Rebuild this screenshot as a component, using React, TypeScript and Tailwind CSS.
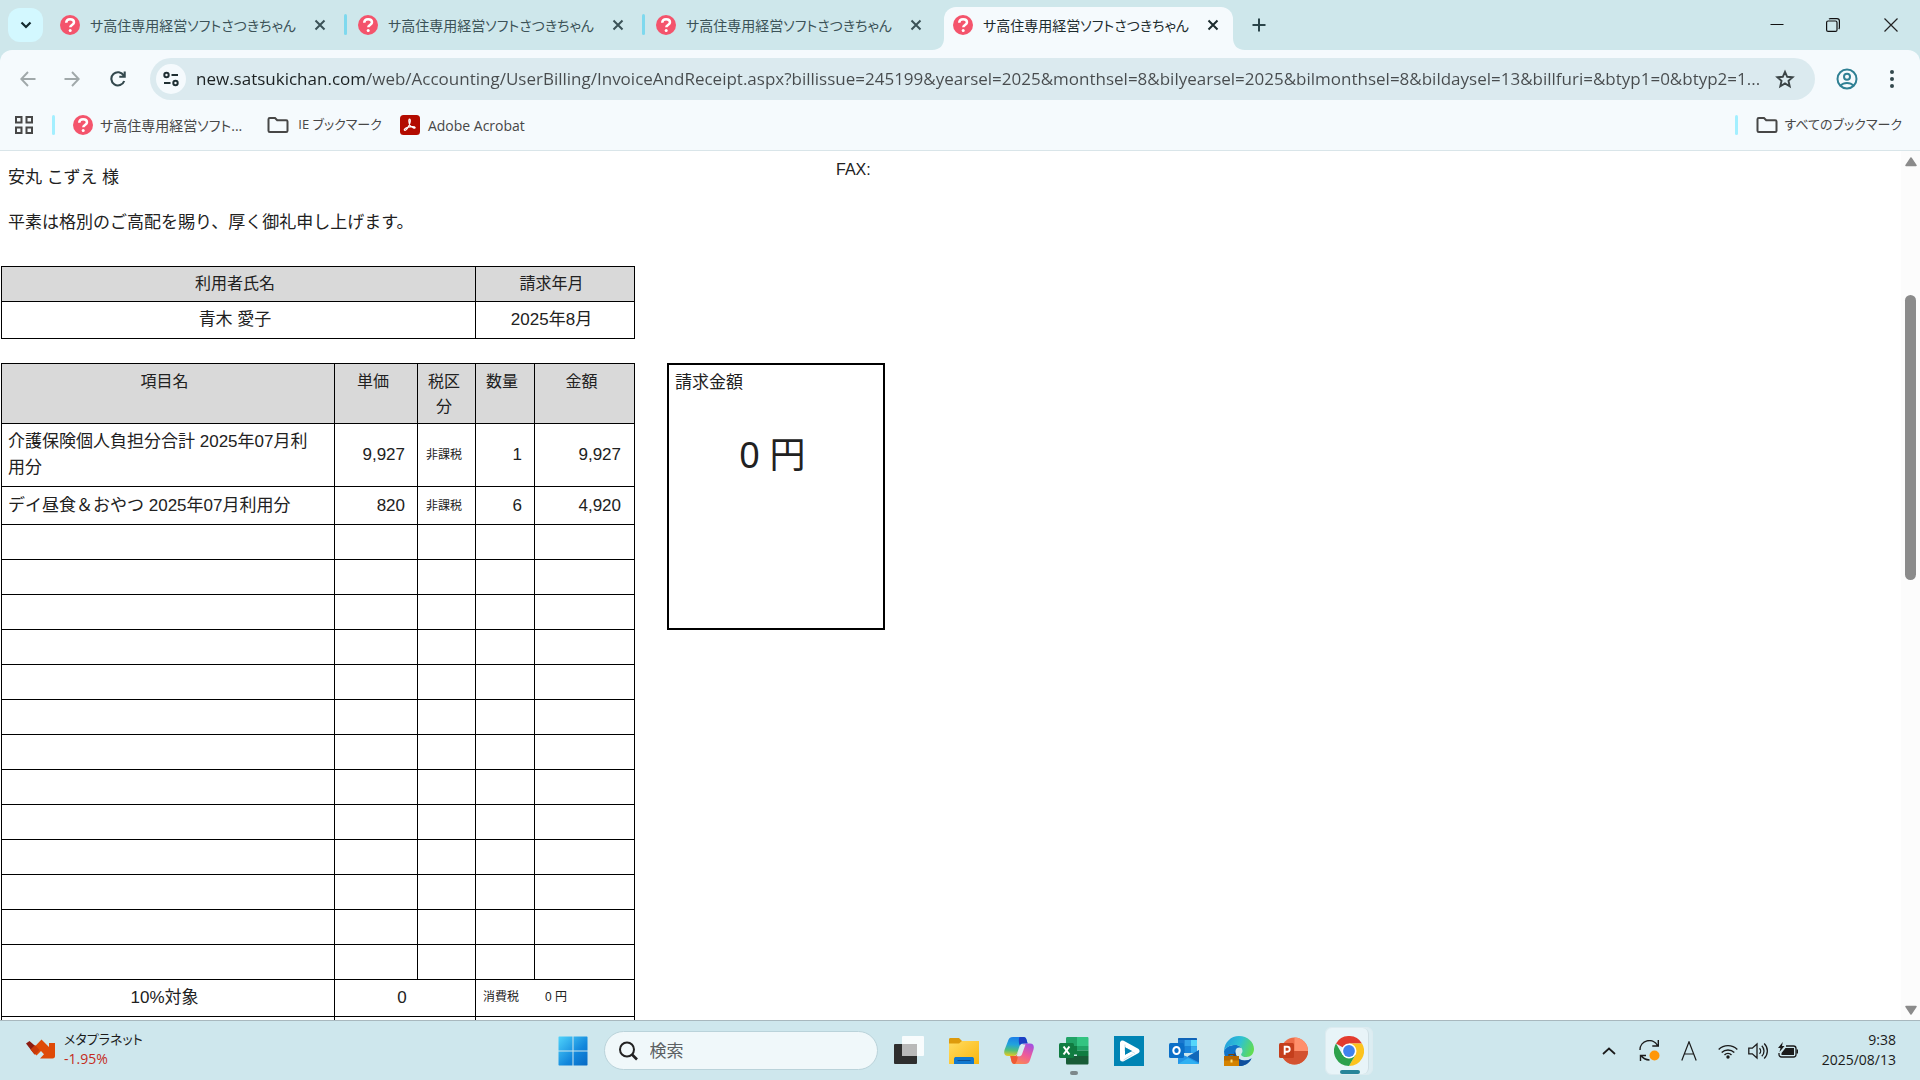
import { ReactNode } from 'react';

const TAB_TITLE = 'サ高住専用経営ソフトさつきちゃん';

const ADDRESS =
  'new.satsukichan.com/web/Accounting/UserBilling/InvoiceAndReceipt.aspx?billissue=245199&yearsel=2025&monthsel=8&bilyearsel=2025&bilmonthsel=8&bildaysel=13&billfuri=&btyp1=0&btyp2=1...';

const tabs = [
  { id: 1, active: false },
  { id: 2, active: false },
  { id: 3, active: false },
  { id: 4, active: true },
];

const items = [
  { name: '介護保険個人負担分合計 2025年07月利用分', price: '9,927', tax: '非課税', qty: '1', total: '9,927' },
  { name: 'デイ昼食＆おやつ 2025年07月利用分', price: '820', tax: '非課税', qty: '6', total: '4,920' },
];

const EMPTY_ROWS = 13;

function Favicon() {
  return (
    <svg viewBox="0 0 20 20" className="size-5 shrink-0">
      <circle cx="10" cy="10" r="10" fill="#f4546c" />
      <path d="M6.200 7.800C6.300 5.400 8 4.200 10.100 4.200c2.200 0 3.900 1.200 3.900 3.100 0 2.700-3.700 2.800-3.700 5" fill="none" stroke="#fff" strokeWidth="2.500" />
      <circle cx="10.200" cy="15.600" r="1.500" fill="#fff" />
    </svg>
  );
}

function FolderIcon() {
  return (
    <svg viewBox="0 0 22 18" className="h-[18px] w-[22px] shrink-0" fill="none" stroke="#474747" strokeWidth="2">
      <path d="M1.500 3.200C1.500 2.300 2 2 2.800 2H8l2.200 2.300h9c.9 0 1.300.4 1.300 1.200v9.200c0 .9-.4 1.300-1.300 1.300H2.800c-.9 0-1.300-.4-1.300-1.300z" />
    </svg>
  );
}

function CloseIcon() {
  return (
    <svg viewBox="0 0 12 12" className="size-3" stroke="currentColor" strokeWidth="2">
      <path d="M1.500 1.500l9 9M10.500 1.500l-9 9" />
    </svg>
  );
}

function Tab({ active }: { active: boolean }) {
  return (
    <div
      className={
        active
          ? 'relative mt-[7px] flex h-[43px] w-[289px] items-center rounded-t-xl bg-[#f5fafd] pb-[7px] pl-[9px] text-[#1c2b2e]'
          : 'flex h-[50px] w-[298px] items-center pl-[10px] text-[#3b5257]'
      }
    >
      {active && (
        <>
          <svg viewBox="0 0 12 12" className="absolute -left-3 bottom-0 size-3">
            <path d="M12 0v12H0C8 12 12 7 12 0z" fill="#f5fafd" />
          </svg>
          <svg viewBox="0 0 12 12" className="absolute -right-3 bottom-0 size-3">
            <path d="M0 0v12h12C4 12 0 7 0 0z" fill="#f5fafd" />
          </svg>
        </>
      )}
      <Favicon />
      <span className="ml-[10px] w-[218px] truncate text-[14px]">{TAB_TITLE}</span>
      <button aria-label="タブを閉じる" className="flex size-6 shrink-0 items-center justify-center">
        <CloseIcon />
      </button>
    </div>
  );
}

function TabStrip() {
  return (
    <div className="flex h-[50px] bg-[#cee7eb]">
      <button aria-label="タブを検索" className="mt-2 ml-2 flex h-[34px] w-[35px] items-center justify-center rounded-xl bg-[#d3f8ff]">
        <svg viewBox="0 0 12 8" className="h-2 w-3" fill="none" stroke="#12292d" strokeWidth="2.200">
          <path d="M1.500 1.500L6 6l4.500-4.500" />
        </svg>
      </button>
      <div className="ml-[7px] flex">
        {tabs.map((tab) => (
          <div key={tab.id} className="flex">
            {(tab.id === 2 || tab.id === 3) && <i className="mt-[14px] -mr-[3px] h-[21px] w-[3px] -translate-x-1 rounded-full bg-[#7ed9ee]" />}
            <Tab active={tab.active} />
          </div>
        ))}
      </div>
      <button aria-label="新しいタブ" className="ml-2 flex w-9 items-center justify-center">
        <svg viewBox="0 0 14 14" className="size-[14px]" stroke="#2a4449" strokeWidth="2">
          <path d="M7 .5v13M.5 7h13" />
        </svg>
      </button>
      <div className="ml-auto flex">
        <button aria-label="最小化" className="flex w-14 items-center justify-center">
          <svg viewBox="0 0 14 14" className="size-[14px]" stroke="#111">
            <path d="M.5 6.500h13" />
          </svg>
        </button>
        <button aria-label="元に戻す" className="flex w-14 items-center justify-center">
          <svg viewBox="0 0 14 14" className="size-[14px]" fill="none" stroke="#111" strokeWidth="1.200">
            <rect x=".6" y="3" width="10.400" height="10.400" rx="1.500" />
            <path d="M3 1.200c.5-.5 1-.6 1.500-.6H11c1.500 0 2.400.9 2.400 2.400V9.500c0 .6-.2 1.100-.6 1.500" />
          </svg>
        </button>
        <button aria-label="閉じる" className="flex w-[59px] items-center justify-center">
          <svg viewBox="0 0 14 14" className="size-[14px]" stroke="#222" strokeWidth="1.200">
            <path d="M.5.5l13 13M13.500.5l-13 13" />
          </svg>
        </button>
      </div>
    </div>
  );
}

function AddressRow() {
  return (
    <div className="flex h-[58px] items-center pr-[18px] pl-[14px]">
      <button aria-label="戻る" className="flex w-7 justify-center">
        <svg viewBox="0 0 16 16" className="size-4" fill="none" stroke="#a0a8aa" strokeWidth="1.900">
          <path d="M15.500 8H1.500M8 1L1.300 8 8 15" />
        </svg>
      </button>
      <button aria-label="進む" className="ml-4 flex w-7 justify-center">
        <svg viewBox="0 0 16 16" className="size-4" fill="none" stroke="#a0a8aa" strokeWidth="1.900">
          <path d="M.5 8h14M8 1l6.700 7L8 15" />
        </svg>
      </button>
      <button aria-label="再読み込み" className="ml-[18px] flex w-7 justify-center">
        <svg viewBox="0 0 16 16" className="size-4" fill="none" stroke="#33484d" strokeWidth="2.100">
          <path d="M14.200 10A6.600 6.600 0 1 1 13.700 4.600M14.700.5v5.300H9.300" />
        </svg>
      </button>
      <div className="ml-[18px] flex h-[42px] min-w-0 flex-1 items-center rounded-full bg-[#dbeaef] pr-[20px] pl-[6px]">
        <button aria-label="サイト情報" className="flex size-[30px] shrink-0 items-center justify-center rounded-full bg-[#f5fafd]">
          <svg viewBox="0 0 16 16" className="size-4" fill="none" stroke="#1f2f33" strokeWidth="2">
            <circle cx="3.500" cy="4" r="2.200" />
            <path d="M8.500 4H15M1 12h6.500" />
            <circle cx="12.500" cy="12" r="2.200" />
          </svg>
        </button>
        <input
          aria-label="アドレス"
          type="text"
          readOnly
          value={ADDRESS}
          className="ml-[10px] min-w-0 flex-1 bg-[linear-gradient(90deg,#1b2021_169px,#474b4d_169px)] bg-clip-text text-[17px] text-transparent outline-none"
        />
        <button aria-label="ブックマークに追加" className="ml-[7px] flex w-5 shrink-0 justify-center">
          <svg viewBox="0 0 20 20" className="size-5" fill="none" stroke="#3b4446" strokeWidth="1.900">
            <path d="M10 2.800l2.200 5 5.400.5-4.100 3.600 1.200 5.300L10 14.400l-4.700 2.800 1.200-5.300-4.100-3.600 5.400-.5z" />
          </svg>
        </button>
      </div>
      <button aria-label="プロフィール" className="ml-[21px] shrink-0">
        <svg viewBox="0 0 22 22" className="size-[22px]" fill="none" stroke="#2f8094" strokeWidth="2">
          <circle cx="11" cy="11" r="9.500" />
          <circle cx="11" cy="8.700" r="3" />
          <path d="M4.500 17.500c1.700-1.800 3.900-2.600 6.500-2.600s4.800.8 6.500 2.600" />
        </svg>
      </button>
      <button aria-label="メニュー" className="ml-6 flex w-5 justify-center">
        <svg viewBox="0 0 4 18" className="h-[18px] w-1" fill="#33484d">
          <circle cx="2" cy="2" r="2" />
          <circle cx="2" cy="9" r="2" />
          <circle cx="2" cy="16" r="2" />
        </svg>
      </button>
    </div>
  );
}

function BookmarkBar() {
  return (
    <nav className="flex h-[42px] items-center pr-[18px] pb-2 pl-[15px] text-[14px] text-[#474747]">
      <button aria-label="アプリ">
        <svg viewBox="0 0 18 18" className="mr-px size-[18px]" fill="none" stroke="#474747" strokeWidth="2">
          <path d="M1 1h5.500v5.500H1zM11.500 1H17v5.500h-5.500zM1 11.500h5.500V17H1zM11.500 11.500H17V17h-5.500z" />
        </svg>
      </button>
      <i className="ml-[18px] h-5 w-[3px] rounded-full bg-[#a3efff]" />
      <a href="#" className="ml-[18px] flex items-center gap-[7px]">
        <Favicon />
        サ高住専用経営ソフト...
      </a>
      <a href="#" className="ml-[25px] flex items-center gap-[9px] text-[13px]">
        <FolderIcon />
        IE ブックマーク
      </a>
      <a href="#" className="ml-[18px] flex items-center gap-2">
        <svg viewBox="0 0 20 20" className="size-5">
          <rect width="20" height="20" rx="3.500" fill="#b30b00" />
          <path d="M9.500 4.200c1.300 0 .9 3.300-.4 6-1.200 2.600-2.800 5.100-4.100 5.100-1.400 0-.9-1.800 2.500-2.900 3.300-1.100 7.300-1.200 7.600.1.300 1.500-3.200.3-4.900-2C8.800 8.600 8.400 4.200 9.500 4.200z" fill="none" stroke="#fff" strokeWidth="1.200" />
        </svg>
        Adobe Acrobat
      </a>
      <i className="ml-auto h-5 w-[3px] rounded-full bg-[#a3efff]" />
      <a href="#" className="ml-[18px] flex items-center gap-[7px] text-[13px]">
        <FolderIcon />
        すべてのブックマーク
      </a>
    </nav>
  );
}

function Invoice() {
  const line = 'border border-black';
  return (
    <div className="grid flex-1 grid-cols-[634px_218px] content-start gap-x-8 gap-y-6 pl-px text-[17px] leading-[26px] text-[#212121]">
      <div className="pt-[14px]">
        <p className="pl-[7px]">安丸 こずえ 様</p>
        <p className="mt-[19px] pl-[7px]">平素は格別のご高配を賜り、厚く御礼申し上げます。</p>
        <table className="mt-[30px] w-full table-fixed border-collapse text-center">
          <colgroup>
            <col className="w-[474px]" />
            <col className="w-[159px]" />
          </colgroup>
          <thead>
            <tr className="h-[35px] bg-[#d9d9d9] text-[16px]">
              <th className={`${line} pr-[7px] font-normal`}>利用者氏名</th>
              <th className={`${line} pr-[7px] font-normal`}>請求年月</th>
            </tr>
          </thead>
          <tbody>
            <tr className="h-[37px]">
              <td className={`${line} pr-[7px]`}>青木 愛子</td>
              <td className={`${line} pr-[7px]`}>2025年8月</td>
            </tr>
          </tbody>
        </table>
      </div>

      <p className="pt-[6px] pl-[169px] text-[16px]">FAX:</p>

      <table className="w-full table-fixed border-collapse">
        <colgroup>
          <col className="w-[333px]" />
          <col className="w-[83px]" />
          <col className="w-[58px]" />
          <col className="w-[59px]" />
          <col className="w-[100px]" />
        </colgroup>
        <thead>
          <tr className="h-[60px] bg-[#d9d9d9] align-top text-[16px] leading-[25px]">
            <th className={`${line} pt-[5px] pr-[7px] font-normal`}>項目名</th>
            <th className={`${line} pt-[5px] pr-[6px] font-normal`}>単価</th>
            <th className={`${line} pt-[5px] pr-3 pl-[7px] font-normal`}>税区分</th>
            <th className={`${line} pt-[5px] pr-[6px] font-normal`}>数量</th>
            <th className={`${line} pt-[5px] pr-[6px] font-normal`}>金額</th>
          </tr>
        </thead>
        <tbody>
          {items.map((item, index) => (
            <tr key={item.name} className={index === 0 ? 'h-[63px]' : 'h-[38px]'}>
              <td className={`${line} pr-3 pl-[6px]`}>{item.name}</td>
              <td className={`${line} pr-3 text-right`}>{item.price}</td>
              <td className={`${line} pr-[5px] text-center text-[12px]`}>{item.tax}</td>
              <td className={`${line} pr-3 text-right`}>{item.qty}</td>
              <td className={`${line} pr-[13px] text-right`}>{item.total}</td>
            </tr>
          ))}
          {Array.from({ length: EMPTY_ROWS }, (_, index) => (
            <tr key={index} className="h-[35px]">
              <td className={line} />
              <td className={line} />
              <td className={line} />
              <td className={line} />
              <td className={line} />
            </tr>
          ))}
          <tr className="h-[37px] text-center">
            <td className={`${line} pr-[7px]`}>10%対象</td>
            <td colSpan={2} className={`${line} pr-[6px]`}>0</td>
            <td colSpan={2} className={`${line} pb-[2px] pl-[7px] text-left text-[12px]`}>
              <span className="mr-[26px]">消費税</span>
              <span>0 円</span>
            </td>
          </tr>
          <tr className="h-[37px] text-center">
            <td className={line} />
            <td colSpan={2} className={line} />
            <td colSpan={2} className={line} />
          </tr>
        </tbody>
      </table>

      <section className="h-[267px] border-2 border-black px-[6px] pt-[5px]">
        <h2>請求金額</h2>
        <p className="mt-[35px] pr-[7px] text-center text-[36px] leading-[50px]">0 円</p>
      </section>
    </div>
  );
}

function Scrollbar() {
  return (
    <div className="flex w-[19px] shrink-0 flex-col items-center bg-[#fcfcfc] pt-[6px] pb-[5px]">
      <button aria-label="上へ">
        <svg viewBox="0 0 12 10" className="h-[10px] w-3">
          <path d="M6 1l5 7.500H1z" fill="#8b8b8b" stroke="#8b8b8b" strokeLinejoin="round" strokeWidth="1.500" />
        </svg>
      </button>
      <div className="mt-32 h-[285px] w-[11px] rounded-full bg-[#8b8b8b]" />
      <button aria-label="下へ" className="mt-auto">
        <svg viewBox="0 0 12 10" className="h-[10px] w-3">
          <path d="M6 9l5-7.500H1z" fill="#8b8b8b" stroke="#8b8b8b" strokeLinejoin="round" strokeWidth="1.500" />
        </svg>
      </button>
    </div>
  );
}

function WindowsLogo() {
  return (
    <svg viewBox="0 0 30 30" className="size-[30px]">
      <defs>
        <linearGradient id="win" x1="0" y1="0" x2="1" y2="1">
          <stop offset="0" stopColor="#4fd3fb" />
          <stop offset=".6" stopColor="#1287dc" />
          <stop offset="1" stopColor="#0669c4" />
        </linearGradient>
      </defs>
      <path d="M1 .5h13.500v14H.5V1zM15.500.5H29l.5.500v13.500h-14zM.5 15.500h14v14H1l-.5-.5zM15.500 15.500h14V29l-.5.500H15.500z" fill="url(#win)" />
    </svg>
  );
}

function TaskViewIcon() {
  return (
    <svg viewBox="0 0 30 30" className="size-[30px]">
      <rect x="0" y="8" width="23" height="20" rx="1" fill="#2e2e2e" />
      <rect x="8" y="0" width="22" height="20" rx="1" fill="#fff" fillOpacity=".85" />
      <rect x="8" y="8" width="15" height="12" fill="#b9b9b9" />
    </svg>
  );
}

function ExplorerIcon() {
  return (
    <svg viewBox="0 0 30 30" className="size-[30px]">
      <defs>
        <linearGradient id="folder" x1="0" y1="0" x2="1" y2="1">
          <stop offset="0" stopColor="#ffdc62" />
          <stop offset="1" stopColor="#fbb60c" />
        </linearGradient>
      </defs>
      <path d="M0 3.500C0 2.500.6 2 1.500 2H10l3 3v3H0z" fill="#dd9a0c" />
      <path d="M0 7.500h10L13 5h17v23H0z" fill="url(#folder)" />
      <path d="M5 28v-5c0-1.500 1-2 2-2h16c1 0 2 .5 2 2v5z" fill="#1078cf" />
      <path d="M9 24.500h12" stroke="#0a4f94" strokeWidth="1.200" strokeLinecap="round" />
    </svg>
  );
}

function CopilotIcon() {
  return (
    <svg viewBox="0 0 30 30" className="size-[30px]">
      <defs>
        <linearGradient id="cpA" x1=".4" y1="0" x2=".3" y2="1">
          <stop offset="0" stopColor="#1b7fe8" />
          <stop offset=".4" stopColor="#22a3dc" />
          <stop offset=".7" stopColor="#4fbf7c" />
          <stop offset="1" stopColor="#e6c822" />
        </linearGradient>
        <linearGradient id="cpB" x1=".8" y1="0" x2=".3" y2="1">
          <stop offset="0" stopColor="#a450e0" />
          <stop offset=".5" stopColor="#ee5a9a" />
          <stop offset="1" stopColor="#fb8a50" />
        </linearGradient>
      </defs>
      <path d="M9 1h10.500c1.800 0 2.600 1.200 3.100 3l1 3.500H19c-2 0-3 1-3.600 3l-2.200 6.500c-.6 2-1.700 3-3.700 3H4c-3.500 0-4.400-2.500-3.500-6L3.800 5.500C4.700 2.300 6 1 9 1z" fill="url(#cpA)" />
      <path d="M15.500 1h4c1.800 0 2.600 1.200 3.100 3l1 3.500H19c-1.500 0-2.500.5-3.200 2C14.500 7 14.500 3 15.500 1z" fill="#1c3fc4" />
      <path d="M21 28H10.500c-1.800 0-2.600-1.200-3.100-3L6.300 20H10c2 0 3-.5 3.600-2.500l1.600-2 3-5.500c.6-2 1.700-2.500 3.700-2.500H26c3.500 0 4.400 2.500 3.500 6l-3.300 10C25.300 26.700 24 28 21 28z" fill="url(#cpB)" />
      <path d="M7.400 25L6.300 20H10c1.500 0 2.600-.4 3.300-1.800C14.500 21 13 26 11 28h-.5c-1.800 0-2.600-1.200-3.100-3z" fill="#ee5a34" />
      <path d="M16.500 10.500c.5-1.500 1.300-2 2.500-2h2.500L18 18.200c-.6 1.500-1.500 2-3 2h-2.500z" fill="#d9edf1" />
    </svg>
  );
}

function ExcelIcon() {
  return (
    <svg viewBox="0 0 30 30" className="size-[30px]">
      <path d="M7 2.500C7 1.500 7.500 1 8.500 1H18v9H7z" fill="#21a366" />
      <path d="M18 1h10.500c.6 0 1 .5 1 1.500V10H18z" fill="#33c481" />
      <path d="M7 10h11v8.500H7z" fill="#107c41" />
      <path d="M18 10h11.500v4.500H18z" fill="#21a366" />
      <path d="M18 14.500h11.500V20H18z" fill="#107c41" />
      <path d="M7 20h22.500v7c0 1-.5 1.500-1.500 1.500H8.500c-1 0-1.500-.5-1.500-1.500z" fill="#185c37" />
      <rect x="0" y="7" width="15" height="15" rx="1.500" fill="#107c41" />
      <path d="M4.600 10.500l5.800 8M10.400 10.500l-5.800 8" stroke="#fff" strokeWidth="2.100" />
    </svg>
  );
}

function PlayerIcon() {
  return (
    <svg viewBox="0 0 30 30" className="size-[30px]">
      <path d="M0 0h30v30H0z" fill="#0084b4" />
      <path d="M8.500 7v16L23 15z" fill="none" stroke="#fff" strokeWidth="5" strokeLinejoin="round" />
      <path d="M11 8.500V15M9.500 24l9-5.500M21 17.500l-8.500-5" stroke="#c8dfe8" strokeWidth="1" />
      <path d="M11 11.200v7.600l7-3.800z" fill="#0084b4" />
    </svg>
  );
}

function OutlookIcon() {
  return (
    <svg viewBox="0 0 30 30" className="size-[30px]">
      <path d="M9 3c0-.6.400-1 1-1h17c.6 0 1 .4 1 1v14H9z" fill="#0f64b8" />
      <path d="M9 4h6.500v6.500H9z" fill="#1a78cf" />
      <path d="M15.500 4H22v6.500h-6.500z" fill="#35a3ea" />
      <path d="M22 4h6v6.500h-6z" fill="#55d6fb" />
      <path d="M15.500 10.500H22V17h-6.500z" fill="#1a86db" />
      <path d="M22 10.500h6V17h-6z" fill="#36a8ee" />
      <path d="M30 14v13c0 .6-.4 1-1 1H9V17l10 4z" fill="#2496e6" />
      <path d="M30 14v12.500L18.500 20.500z" fill="#1268ba" />
      <path d="M9 28l10-6 10.500 5.500c-.2.300-.6.500-1 .5z" fill="#2fb0f2" />
      <rect x="0" y="7" width="15" height="15" rx="1.500" fill="#0a6fc8" />
      <ellipse cx="7.500" cy="14.500" rx="3.200" ry="3.600" fill="none" stroke="#fff" strokeWidth="2" />
    </svg>
  );
}

function EdgeIcon() {
  return (
    <svg viewBox="0 0 30 30" className="size-[30px]">
      <defs>
        <linearGradient id="edgeTop" x1="0" y1=".3" x2="1" y2=".6">
          <stop offset="0" stopColor="#239ede" />
          <stop offset=".5" stopColor="#2fc2d2" />
          <stop offset="1" stopColor="#62dd4e" />
        </linearGradient>
      </defs>
      <path d="M0 15c2-4 6-6 11-6 4 0 7 2 7.500 5L12 16c-1 5 4 9.500 10 8.500 2.500-.4 4-1.200 5.500-2.300C25.500 27 21 30 15 30 6.500 30 0 24 0 15z" fill="#1173c8" />
      <path d="M11.500 14.500c-.6 5.500 3.500 10 9.500 10 2.800 0 4.800-1 6.500-2.300C25.500 27 21 30 15 30c-5-3-7-10-3.500-15.500z" fill="#0f4f9c" />
      <circle cx="15.500" cy="15.500" r="4" fill="#cfe8ed" />
      <path d="M15 17c1 3.500 4 5.500 8 5.500 2.500 0 5-1.500 6-4l-3-3H17z" fill="#cfe8ed" />
      <path d="M0 15C.5 6 7 0 15 0c8.500 0 15 6 15 13 0 5-3.500 8-7.500 8-3.600 0-5.400-1.300-5.400-2.600 0-1 1.400-1.500 1.400-3.500C18.500 11.500 15 9 11 9 5.500 9 1.500 12 0 15z" fill="url(#edgeTop)" />
      <path d="M0 20h15v10H0z" fill="#d58300" />
      <path d="M0 20h15v4.500H0z" fill="#b56700" />
      <path d="M5 20v-1.500h5V20" fill="none" stroke="#7a4200" strokeWidth="1.200" />
      <rect x="6.500" y="23.500" width="2" height="3" fill="#ffe07a" />
    </svg>
  );
}

function PowerPointIcon() {
  return (
    <svg viewBox="0 0 30 30" className="size-[30px]">
      <circle cx="15.500" cy="15" r="13.500" fill="#ed6c47" />
      <path d="M15.500 1.500A13.500 13.500 0 0 1 29 15H15.500z" fill="#ff8f6b" />
      <path d="M2 15h27a13.500 13.500 0 0 1-27 0z" fill="#d35230" />
      <rect x="0" y="7" width="15" height="15" rx="1.500" fill="#c43e1c" />
      <path d="M5.700 18.800v-8h2.400c1.700 0 2.600.9 2.600 2.400s-1 2.500-2.700 2.500H5.700" fill="none" stroke="#fff" strokeWidth="1.900" />
    </svg>
  );
}

function ChromeIcon() {
  return (
    <svg viewBox="0 0 30 30" className="size-[30px]">
      <path d="M15 15L2 7.500A15 15 0 0 1 28 7.500H15z" fill="#e33b2e" />
      <path d="M15 7.500h13A15 15 0 0 1 15 30l6.500-11.250z" fill="#fcc31e" />
      <path d="M2 7.500A15 15 0 0 0 15 30l6.500-11.250L8.500 18.750z" fill="#2da14c" />
      <circle cx="15" cy="15" r="7.500" fill="#fff" />
      <circle cx="15" cy="15" r="5.900" fill="#4082ee" />
    </svg>
  );
}

const apps: { name: string; icon: ReactNode; running?: boolean }[] = [
  { name: 'タスク ビュー', icon: <TaskViewIcon /> },
  { name: 'エクスプローラー', icon: <ExplorerIcon /> },
  { name: 'Copilot', icon: <CopilotIcon /> },
  { name: 'Excel', icon: <ExcelIcon />, running: true },
  { name: 'プレーヤー', icon: <PlayerIcon /> },
  { name: 'Outlook', icon: <OutlookIcon /> },
  { name: 'Edge', icon: <EdgeIcon /> },
  { name: 'PowerPoint', icon: <PowerPointIcon /> },
];

function Taskbar() {
  return (
    <footer className="grid h-[60px] shrink-0 grid-cols-[1fr_auto_1fr] items-center border-t border-[#a8b8be] bg-[#cee7ed]">
      <button className="flex items-center gap-2 pb-1 pl-[26px] text-left">
        <svg viewBox="0 0 30 20" className="h-5 w-[30px]">
          <path d="M0 4.500L3.500 2l4 3.500L13 10l-4.500 5.500z" fill="#8c1d12" />
          <path d="M5.500 11L15.500.5l7.500 7.500V4h6v13c0 1.500-.7 2.500-2.500 2.500H14l4-4.200-3-3.300-4.500 4.500z" fill="#df4a07" />
          <path d="M4.500 10.500L9 6l4.500 5-4.500 4.800z" fill="#c93a0a" />
        </svg>
        <span className="text-[13px] leading-5 text-[#1c1c1c]">
          メタプラネット
          <span className="block text-[14px] text-[#c42b1c]">-1.95%</span>
        </span>
      </button>

      <div className="flex h-[59px] items-center pl-[10px]">
        <button aria-label="スタート">
          <WindowsLogo />
        </button>
        <label className="ml-4 flex h-[39px] w-[274px] items-center rounded-full border border-[#bad3da] bg-[#f0f8fa] pl-[13px]">
          <svg viewBox="0 0 20 20" className="size-5" fill="none" stroke="#222" strokeWidth="2">
            <circle cx="9" cy="8.500" r="7" />
            <path d="M14 13.500l5 5" strokeWidth="2.600" />
          </svg>
          <input type="text" placeholder="検索" aria-label="検索" className="ml-[12px] w-40 bg-transparent text-[17px] outline-none placeholder:text-[#5c6163]" />
        </label>
        <div className="ml-4 flex gap-[25px]">
          {apps.map((app) => (
            <button key={app.name} aria-label={app.name} className="relative">
              {app.icon}
              {app.running && <i className="absolute -bottom-[9px] left-[11px] h-1 w-2 rounded-full bg-[#7d888b]" />}
            </button>
          ))}
        </div>
        <button aria-label="Chrome" className="relative ml-4 flex h-12 w-12 items-center rounded-md border border-[#dcebf0] bg-[#dcedf2]">
          <span className="flex h-[46px] w-[43px] items-center justify-center rounded-md border-r border-[#cfdfe4] bg-[#e8f4f8] pl-[5px]">
            <ChromeIcon />
          </span>
          <i className="absolute bottom-0 left-[14px] h-1 w-5 rounded-full bg-[#26859a]" />
        </button>
      </div>

      <div className="flex items-center justify-end pr-6 text-[#1b1b1b]">
        <button aria-label="隠れているインジケーター">
          <svg viewBox="0 0 14 8" className="h-2 w-[14px]" fill="none" stroke="currentColor" strokeWidth="1.700">
            <path d="M1 7l6-5.500L13 7" />
          </svg>
        </button>
        <button aria-label="更新" className="ml-[23px]">
          <svg viewBox="0 0 21 21" className="size-[21px]" fill="none" stroke="currentColor" strokeWidth="1.400">
            <path d="M1 10A9.300 9.300 0 0 1 18.500 5.500M19.300 0v6h-6M1.500 21v-5.500h5.500M2 15.500c2 2.800 4.500 4.300 8.500 4.500" />
            <circle cx="15.500" cy="15.500" r="5" fill="#ff9708" stroke="none" />
          </svg>
        </button>
        <button aria-label="入力モード" className="ml-[21px]">
          <svg viewBox="0 0 16 20" className="h-5 w-4" fill="none" stroke="currentColor" strokeWidth="1.200">
            <path d="M.8 19.500L8 .8l7.200 18.700M3.200 13h9.600" />
          </svg>
        </button>
        <button aria-label="ネットワークと音量" className="ml-[21px] flex items-center gap-[10px]">
          <svg viewBox="0 0 20 16" className="h-4 w-5" fill="none" stroke="currentColor" strokeWidth="1.400">
            <path d="M.7 6.500a13 13 0 0 1 18.600 0M3.700 9.500a9 9 0 0 1 12.600 0M6.500 12a5 5 0 0 1 7 0" />
            <circle cx="10" cy="14" r="1.700" fill="currentColor" stroke="none" />
          </svg>
          <svg viewBox="0 0 20 18" className="h-[18px] w-5" fill="none" stroke="currentColor" strokeWidth="1.300">
            <path d="M.8 6.200h3.500L9 2v14l-4.700-4.200H.8z" />
            <path d="M11.500 6.200a4 4 0 0 1 0 5.600M13.800 3.700a7.500 7.500 0 0 1 0 10.600M16.200 1.500a10.500 10.500 0 0 1 0 15" />
          </svg>
          <svg viewBox="0 0 20 17" className="h-[17px] w-5" fill="none" stroke="currentColor" strokeWidth="1.300">
            <path d="M8 4h7.500C17 4 18 5 18 6.500v6c0 1.500-1 2.500-2.500 2.500h-12C2 15 1 14 1 12.500V11" />
            <path d="M3.500 13v-2l4-5H16v7zM18.500 7.500H20v4h-1.500z" fill="currentColor" stroke="none" />
            <path d="M4.800 0L0 6h2.500L1.500 10 6.500 4H4z" fill="currentColor" stroke="none" />
          </svg>
        </button>
        <button className="ml-6 pb-[2px] text-right text-[14px] leading-5">
          9:38
          <br />
          2025/08/13
        </button>
      </div>
    </footer>
  );
}

export default function App() {
  return (
    <div className="flex h-screen flex-col overflow-hidden bg-white [font-family:'Open_Sans','Noto_Sans_CJK_JP',sans-serif] [font-feature-settings:'palt']">
      <header className="shrink-0 border-b border-[#d9e5e9] bg-[#cee7eb]">
        <TabStrip />
        <div className="rounded-t-xl bg-[#f5fafd]">
          <AddressRow />
          <BookmarkBar />
        </div>
      </header>
      <main className="flex min-h-0 flex-1 overflow-hidden [font-family:'Liberation_Sans','Noto_Sans_CJK_JP',sans-serif] [font-feature-settings:normal]">
        <Invoice />
        <Scrollbar />
      </main>
      <Taskbar />
    </div>
  );
}
